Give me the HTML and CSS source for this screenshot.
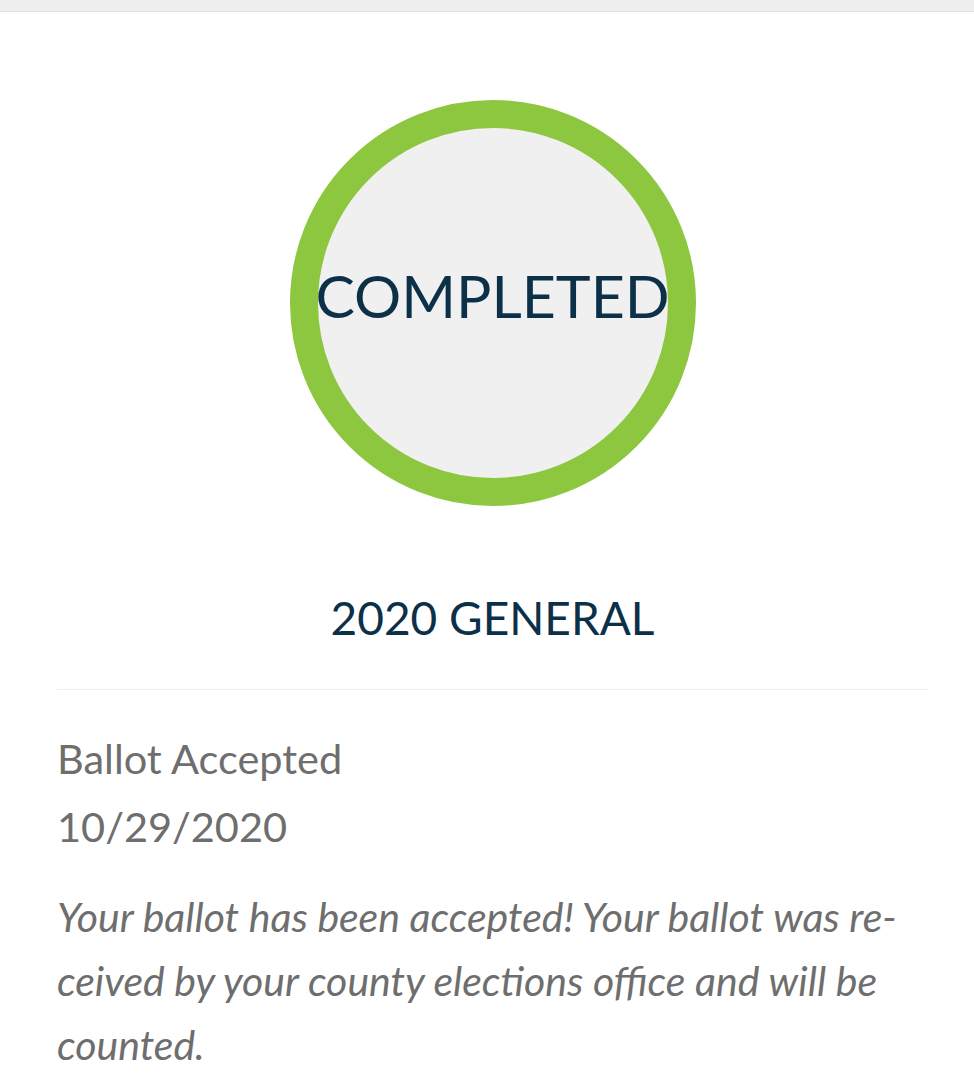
FILE: index.html
```html
<!DOCTYPE html>
<html lang="en">
<head>
<meta charset="utf-8">
<link rel="stylesheet" href="styles.css">
</head>
<body>
<div class="topbar"></div>
<main class="card">
  <div class="status-wrap">
    <div class="status-ring">
      <span class="status-text">COMPLETED</span>
    </div>
  </div>
  <h2 class="election">2020 GENERAL</h2>
  <hr class="divider">
  <div class="event">
    <div class="event-title">Ballot Accepted</div>
    <div class="event-date">10/29/2020</div>
  </div>
  <p class="event-desc">Your ballot has been accepted! Your ballot was re&shy;ceived by your county elections office and will be counted.</p>
</main>
</body>
</html>
```
FILE: styles.css
```css
html, body {
  margin: 0;
  padding: 0;
  background: #ffffff;
}
body {
  font-family: Lato, "Open Sans", sans-serif;
}
.topbar {
  height: 11px;
  background: #eeeeee;
  border-bottom: 1px solid #dedede;
}
.card {
  background: #ffffff;
  padding: 0 46px 0 57px;
}
.status-wrap {
  display: flex;
  justify-content: center;
  padding-top: 88px;
}
.status-ring {
  box-sizing: border-box;
  width: 406px;
  height: 406px;
  border-radius: 50%;
  border: 28px solid #8dc63f;
  background: #f0f0f0;
  display: flex;
  align-items: center;
  justify-content: center;
  overflow: visible;
}
.status-text {
  font-size: 59px;
  color: #0d3049;
  white-space: nowrap;
  line-height: 1;
  margin-top: -16px;
}
.election {
  margin: 84px 0 0;
  text-align: center;
  font-weight: 400;
  font-size: 46px;
  color: #0d3049;
  line-height: 56px;
}
.divider {
  margin: 43px 0 0;
  border: 0;
  border-top: 1px solid #eeeeee;
}
.event {
  margin-top: 34px;
  color: #6e6e6e;
  font-size: 41.5px;
  line-height: 68px;
}
.event-desc {
  margin: 25px 0 0;
  color: #6e6e6e;
  font-style: italic;
  font-size: 41px;
  line-height: 64px;
  hyphens: manual;
}
```
